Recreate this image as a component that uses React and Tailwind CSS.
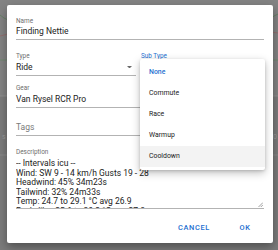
import React from "react";

const font = { fontFamily: "Roboto, 'Noto Sans', Arial, sans-serif" };

function Label({ children, blue }) {
  return (
    <div className={`text-[6.4px] leading-[8px] h-[8px] ${blue ? "text-[#1e6fd0]" : "text-[#6e6e6e]"}`}>
      {children}
    </div>
  );
}

export default function App() {
  const items = ["None", "Commute", "Race", "Warmup", "Cooldown"];
  return (
    <div className="relative w-[278px] h-[250px] overflow-hidden bg-[#7b7b7b] pt-[5px] pl-[7px]" style={font}>
      <svg className="absolute inset-0" width="278" height="250" viewBox="0 0 278 250">
        <rect x="0" y="0" width="278" height="96" fill="#838383" />
        <line x1="0" y1="96" x2="278" y2="96" stroke="#8f8f8f" strokeWidth="1" />
        <line x1="0" y1="155" x2="278" y2="155" stroke="#8a8a8a" strokeWidth="1" />
        <polyline points="0,15 4,18 8,20 270,20 274,16 278,14" fill="none" stroke="#5f805f" strokeWidth="0.8" />
        <polyline points="0,36 8,34 270,32 278,33" fill="none" stroke="#946a6a" strokeWidth="0.8" />
        <line x1="0" y1="60" x2="278" y2="60" stroke="#6a8a6a" strokeWidth="0.8" />
        <text x="2" y="139" fontSize="7" fill="#9a9a9a" style={font}>s</text>
        <text x="273" y="139" fontSize="7" fill="#9a9a9a" style={font}>0</text>
      </svg>

      <div className="relative w-[266px] h-[238px] bg-white rounded-[2px] shadow-[0_4px_10px_rgba(0,0,0,0.35)] px-[9px] pt-[12px] flex flex-col">
        <div>
          <Label>Name</Label>
          <div className="text-[8.5px] leading-[12px] pb-[2px] text-[#222] border-b border-[#b3b3b3]">Finding Nettie</div>
        </div>

        <div className="mt-[12px] flex gap-[5px]">
          <div className="w-[120px]">
            <Label>Type</Label>
            <div className="mt-[1px] pb-[2px] flex items-center justify-between border-b border-[#b3b3b3]">
              <span className="text-[8.5px] leading-[12px] text-[#222]">Ride</span>
              <svg width="5" height="2.5" viewBox="0 0 5 2.5" className="mr-[4.5px]">
                <path d="M0 0 L5 0 L2.5 2.5 Z" fill="#6a6a6a" />
              </svg>
            </div>
          </div>
          <div className="flex-1">
            <Label blue>Sub Type</Label>
          </div>
        </div>

        <div className="mt-[8px]">
          <Label>Gear</Label>
          <div className="mt-[1px] text-[8.5px] leading-[12px] pb-[2px] text-[#222] border-b border-[#b3b3b3]">Van Rysel RCR Pro</div>
        </div>

        <div className="mt-[13px]">
          <div className="text-[8.5px] leading-[12px] pb-[2px] text-[#7a7a7a] border-b border-[#b3b3b3]">Tags</div>
        </div>

        <div className="mt-[12px]">
          <Label>Description</Label>
          <div className="relative h-[53px] pt-[3px] overflow-hidden border-b border-[#b3b3b3]">
            <div className="text-[8.5px] leading-[9.6px] text-[#222] whitespace-pre">
              {"-- Intervals icu --\nWind: SW 9 - 14 km/h Gusts 19 - 28\nHeadwind: 45% 34m23s\nTailwind: 32% 24m33s\nTemp: 24.7 to 29.1 °C avg 26.9\nFeels like: 25.6 to 30.2 °C avg 27.8"}
            </div>
            <svg width="5" height="5" viewBox="0 0 5 5" className="absolute right-[1px] bottom-[1px]">
              <line x1="5" y1="0.5" x2="0.5" y2="5" stroke="#7a7a7a" strokeWidth="0.7" />
              <line x1="5" y1="2.8" x2="2.8" y2="5" stroke="#7a7a7a" strokeWidth="0.7" />
            </svg>
          </div>
        </div>

        <div className="mt-[9.5px] flex justify-end gap-[11px] pr-[2px]">
          <div className="w-[46px] h-[19px] flex items-center justify-center text-[7.4px] font-medium tracking-[0.09em] text-[#1e6fd0]">CANCEL</div>
          <div className="w-[34px] h-[19px] flex items-center justify-center text-[7.4px] font-medium tracking-[0.09em] text-[#1e6fd0]">OK</div>
        </div>

        <div className="absolute left-[133px] top-[54px] w-[125px] bg-white rounded-[2px] shadow-[0_3px_8px_rgba(0,0,0,0.25),0_1px_3px_rgba(0,0,0,0.15)] py-[3px]">
          {items.map((it, i) => (
            <div
              key={it}
              className={`h-[21px] flex items-center pl-[9px] text-[6.9px] ${i === 0 ? "text-[#1e6fd0] font-medium" : "text-[#222]"} ${i === 4 ? "bg-[#f3f3f3]" : ""}`}
            >
              {it}
            </div>
          ))}
        </div>
      </div>
    </div>
  );
}
